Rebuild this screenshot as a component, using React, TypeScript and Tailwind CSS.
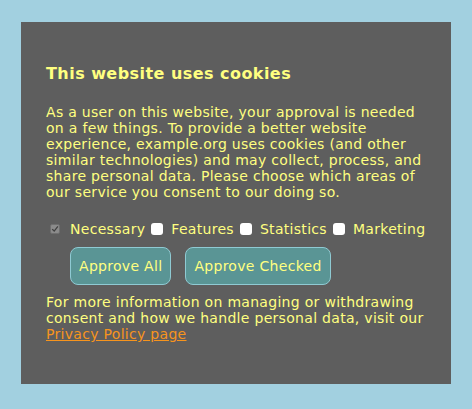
import { useState } from "react";

const options = ["Necessary", "Features", "Statistics", "Marketing"];

function Box({ checked, disabled, onClick }: { checked: boolean; disabled?: boolean; onClick?: () => void }) {
  if (disabled) {
    return (
      <span className="mr-[2px] flex h-[10px] w-[10px] items-center justify-center rounded-[2px] border border-[#6f6f6f] bg-[#8b8b8b]">
        <svg viewBox="0 0 10 10" className="h-[8px] w-[8px]">
          <path d="M1.5 5.2 L4 7.6 L8.6 1.8" fill="none" stroke="#3f3f3f" strokeWidth="1.6" />
        </svg>
      </span>
    );
  }
  return (
    <span
      onClick={onClick}
      className="flex h-[12px] w-[12px] items-center justify-center rounded-[3px] bg-white"
    >
      {checked ? (
        <svg viewBox="0 0 10 10" className="h-[9px] w-[9px]">
          <path d="M1.5 5.2 L4 7.6 L8.6 1.8" fill="none" stroke="#333" strokeWidth="1.6" />
        </svg>
      ) : null}
    </span>
  );
}

export default function App() {
  const [checked, setChecked] = useState<Record<string, boolean>>({
    Necessary: true,
    Features: false,
    Statistics: false,
    Marketing: false,
  });

  function toggle(name: string) {
    if (name === "Necessary") return;
    setChecked((prev) => ({ ...prev, [name]: !prev[name] }));
  }

  return (
    <div className="h-[409px] bg-[#a2d0e0] px-[21px] pt-[22px] font-['DejaVu_Sans',sans-serif] tracking-[0.3px] text-[#ffff80]">
      <div className="h-[362px] bg-[#5e5e5e] px-[25px] pt-[42px]">
        <h2 className="text-[16px] font-bold leading-[19px] tracking-[0.45px]">This website uses cookies</h2>
        <p className="mt-[21px] text-[14px] leading-[16px]">
          As a user on this website, your approval is needed on a few things. To provide a better website
          experience, example.org uses cookies (and other similar technologies) and may collect, process, and
          share personal data. Please choose which areas of our service you consent to our doing so.
        </p>

        <div className="mt-[21px] flex items-center pl-[4px] text-[14px] leading-[16px]">
          {options.map((name) => (
            <label key={name} className="mr-[6px] flex items-center gap-[8px]">
              <Box checked={checked[name]} disabled={name === "Necessary"} onClick={() => toggle(name)} />
              {name}
            </label>
          ))}
        </div>

        <div className="mt-[10px] flex gap-[14px] pl-[24px]">
          <button className="h-[38px] rounded-[8px] border border-[#8fcad3] bg-[#5a9595] px-[8px] text-[14px] tracking-[0.3px] text-[#ffff80]">
            Approve All
          </button>
          <button className="h-[38px] rounded-[8px] border border-[#8fcad3] bg-[#5a9595] px-[8px] text-[14px] tracking-[0.3px] text-[#ffff80]">
            Approve Checked
          </button>
        </div>

        <p className="mt-[9px] text-[14px] leading-[16px]">
          For more information on managing or withdrawing consent and how we handle personal data, visit our{" "}
          <a href="#" className="text-[#f7941d] underline">
            Privacy Policy page
          </a>
        </p>
      </div>
    </div>
  );
}
